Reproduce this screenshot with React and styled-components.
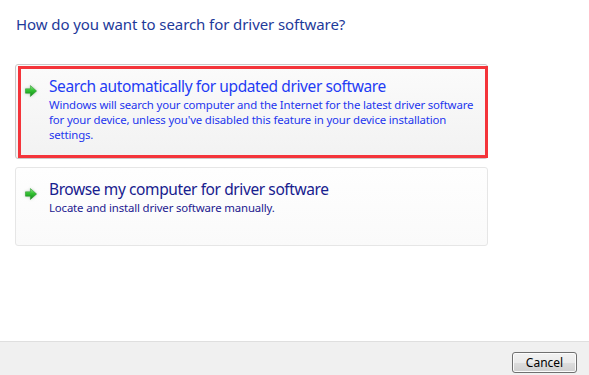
import styled, { createGlobalStyle } from "styled-components";

const GlobalStyle = createGlobalStyle`
  html, body {
    margin: 0;
    padding: 0;
    background: #ffffff;
  }
  body {
    font-family: "Noto Sans", "Open Sans", sans-serif;
  }
`;

const Window = styled.div`
  width: 589px;
  height: 375px;
  display: flex;
  flex-direction: column;
  overflow: hidden;
`;

const Content = styled.div`
  flex: 1;
  padding: 13px 0 0 16px;
`;

const Instruction = styled.h1`
  margin: 0;
  font-size: 15px;
  font-weight: 400;
  line-height: 22px;
  letter-spacing: -0.08px;
  color: #1e3a9a;
`;

const Options = styled.div`
  margin: 29px 0 0 -1px;
  width: 473px;
  display: flex;
  flex-direction: column;
  gap: 8px;
`;

const Option = styled.div`
  position: relative;
  display: flex;
  gap: 12px;
  min-height: ${(p) => p.$height}px;
  box-sizing: border-box;
  padding: 11px 10px 0 9px;
  border: 1px solid ${(p) => (p.$active ? "#c9c9c9" : "#e6e6e6")};
  border-radius: 3px;
  background: ${(p) =>
    p.$active
      ? "linear-gradient(#fbfbfb, #f2f2f2)"
      : "linear-gradient(#fefefe, #fafafa)"};

  ${(p) =>
    p.$active &&
    `
    &::after {
      content: "";
      position: absolute;
      top: 1px;
      left: 2px;
      right: -1px;
      bottom: 0;
      border: 3px solid #f4343a;
    }
  `}
`;

const ArrowBox = styled.div`
  width: 12px;
  flex: none;
  padding-top: 4px;
  filter: drop-shadow(0 0 1.5px rgba(120, 140, 120, 0.45));
`;

const Texts = styled.div`
  display: flex;
  flex-direction: column;
  white-space: nowrap;
`;

const OptionTitle = styled.div`
  font-size: 15.5px;
  line-height: 21px;
  letter-spacing: -0.4px;
  color: ${(p) => (p.$active ? "#1f3cf4" : "#17208e")};
`;

const OptionText = styled.div`
  font-size: 11.4px;
  line-height: 15px;
  letter-spacing: -0.15px;
  color: ${(p) => (p.$active ? "#2436ee" : "#1c2090")};
`;

const Footer = styled.div`
  height: 34px;
  box-sizing: border-box;
  border-top: 1px solid #dfdfdf;
  background: #f0f0f0;
  display: flex;
  justify-content: flex-end;
  align-items: flex-start;
  padding: 10px 12px 0 0;
`;

const Button = styled.button`
  width: 65px;
  height: 21px;
  padding: 0;
  border: 1px solid #707070;
  border-radius: 3px;
  background: linear-gradient(#f2f2f2 0%, #ebebeb 50%, #dddddd 51%, #cfcfcf 100%);
  box-shadow: inset 0 0 0 1px #fcfcfc;
  font-family: "Noto Sans", "Open Sans", sans-serif;
  font-size: 12px;
  color: #000000;
`;

const Arrow = () => (
  <svg width="12" height="12" viewBox="0 0 12 12">
    <defs>
      <linearGradient id="ag" x1="0" y1="0" x2="0" y2="1">
        <stop offset="0" stopColor="#8ee889" />
        <stop offset="0.45" stopColor="#33c032" />
        <stop offset="1" stopColor="#138a17" />
      </linearGradient>
    </defs>
    <path
      d="M0.5 3.8 H5.4 V0.5 L11.6 6 L5.4 11.5 V8.2 H0.5 Z"
      fill="url(#ag)"
      stroke="#1d9221"
      strokeWidth="0.5"
    />
  </svg>
);

const choices = [
  {
    title: "Search automatically for updated driver software",
    lines: [
      "Windows will search your computer and the Internet for the latest driver software",
      "for your device, unless you've disabled this feature in your device installation",
      "settings.",
    ],
    active: true,
    height: 95,
  },
  {
    title: "Browse my computer for driver software",
    lines: ["Locate and install driver software manually."],
    active: false,
    height: 79,
  },
];

export default function App() {
  return (
    <>
      <GlobalStyle />
      <Window>
        <Content>
          <Instruction>How do you want to search for driver software?</Instruction>
          <Options>
            {choices.map((c) => (
              <Option key={c.title} $active={c.active} $height={c.height}>
                <ArrowBox>
                  <Arrow />
                </ArrowBox>
                <Texts>
                  <OptionTitle $active={c.active}>{c.title}</OptionTitle>
                  {c.lines.map((l) => (
                    <OptionText key={l} $active={c.active}>
                      {l}
                    </OptionText>
                  ))}
                </Texts>
              </Option>
            ))}
          </Options>
        </Content>
        <Footer>
          <Button>Cancel</Button>
        </Footer>
      </Window>
    </>
  );
}
